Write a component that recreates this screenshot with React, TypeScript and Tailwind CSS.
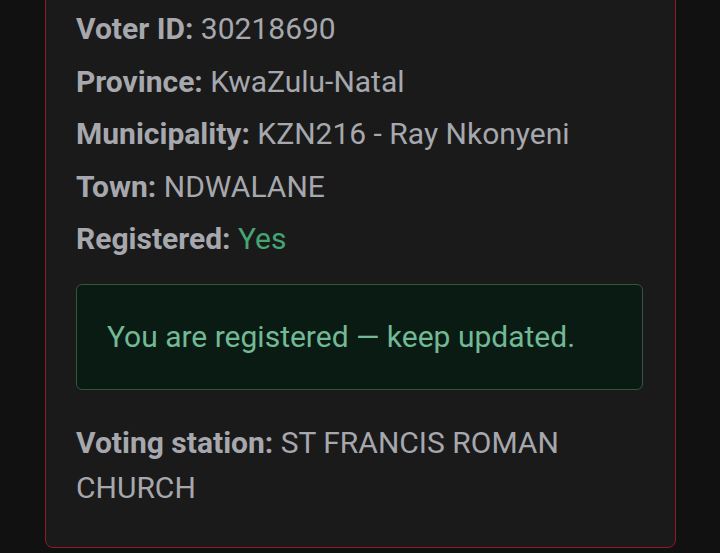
const rows: { label: string; value: string; green?: boolean }[] = [
  { label: 'Voter ID:', value: '30218690' },
  { label: 'Province:', value: 'KwaZulu-Natal' },
  { label: 'Municipality:', value: 'KZN216 - Ray Nkonyeni' },
  { label: 'Town:', value: 'NDWALANE' },
  { label: 'Registered:', value: 'Yes', green: true },
];

export default function App() {
  return (
    <div className="h-[553px] w-[720px] overflow-hidden bg-[#111111] font-['Roboto',sans-serif]">
      <div className="ml-[45px] mt-[-40px] w-[631px] rounded-lg border border-[#8e1b1f] bg-[#1a1a1b] pl-[30px] pr-[32px] pb-[37px] pt-[45px] text-[30px] leading-[45px] text-[#a6a8ad]">
        {rows.map((r) => (
          <p key={r.label} className="mb-[7.5px]">
            <span className="font-bold">{r.label}</span>{' '}
            <span className={r.green ? 'text-[#44a673]' : ''}>{r.value}</span>
          </p>
        ))}

        {/* status box */}
        <div className="mt-[22.5px] rounded-md border border-[#35533f] bg-[#0a1b14] px-[30px] py-[29.5px] text-[#72b995]">
          You are registered — keep updated.
        </div>

        <p className="mt-[30.5px]">
          <span className="font-bold">Voting station:</span> ST FRANCIS ROMAN CHURCH
        </p>
      </div>
    </div>
  );
}
